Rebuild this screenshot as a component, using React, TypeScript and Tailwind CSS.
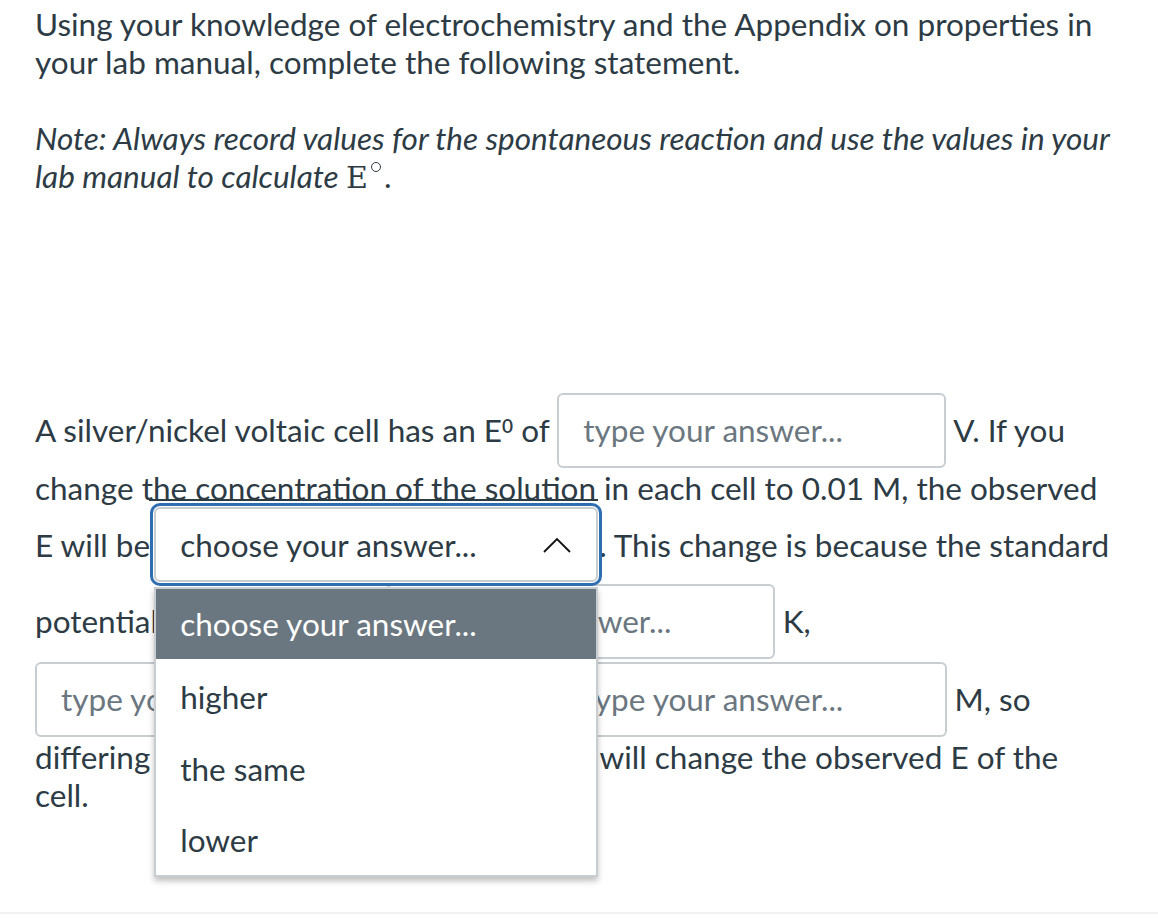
import React from "react";

const Input = ({ extra = "" }: { extra?: string }) => (
  <span
    className={`inline-block w-[389px] align-baseline my-[1.5px] border-2 border-[#c7cdd1] rounded-[6px] px-[24px] py-[16.5px] leading-[38px] text-[#6b7780] bg-white ${extra}`}
  >
    type your answer...
  </span>
);

export default function App() {
  return (
    <div
      className="relative w-[1158px] h-[918px] bg-white text-[#2d3b45] text-[31.5px] leading-[38px]"
      style={{ fontFamily: "Lato, 'Noto Sans', sans-serif" }}
    >
      <div className="pl-[35px] pr-[42px] pt-[5px]">
        <p>
          Using your knowledge of electrochemistry and the Appendix on properties in your lab manual, complete the
          following statement.
        </p>
        <p className="mt-[38px] italic">
          Note: Always record values for the spontaneous reaction and use the values in your lab manual to calculate{" "}
          <span className="not-italic text-[30px]" style={{ fontFamily: "'DejaVu Serif', serif" }}>
            E
          </span>
          <span className="inline-block w-[10px] h-[10px] rounded-full border-[1.5px] border-[#2d3b45] ml-[3px] mr-[4px] relative top-[-16px]" />
          .
        </p>
        <div className="mt-[194px]">
          A silver/nickel voltaic cell has an E<sup className="text-[19px] font-semibold">0</sup> of <Input /> V. If you
          change the concentration of the solution in each cell to 0.01 M, the observed E will be{" "}
          <span className="relative inline-block align-baseline ml-[-4px] mr-[1px]">
            <span className="absolute left-[-5px] right-[0px] top-[-8px] h-[2px] bg-[#2d3b45]" />
            <span className="flex items-center justify-between w-[444px] border-2 border-[#c7cdd1] rounded-[6px] pl-[24px] pr-[24px] pt-[17px] pb-[16px] leading-[38px] bg-white shadow-[0_0_0_1px_#ffffff,0_0_0_4px_#2f6eb0]">
              <span>choose your answer...</span>
              <svg width="30" height="18" viewBox="0 0 30 18" className="ml-2">
                <path d="M2 16 L15 3 L28 16" fill="none" stroke="#111" strokeWidth="1.8" />
              </svg>
            </span>
            <span className="absolute left-0 top-[80px] w-[444px] bg-white border-2 border-[#c7cdd1] shadow-[0_4px_6px_rgba(0,0,0,0.25)] z-10">
              <span className="block bg-[#6b7780] text-white pl-[24px] pt-[16px] h-[70px]">choose your answer...</span>
              <span className="block pl-[24px] h-[72px] pt-[19px]">higher</span>
              <span className="block pl-[24px] h-[72px] pt-[19px]">the same</span>
              <span className="block pl-[24px] h-[72px] pt-[18px]">lower</span>
            </span>
          </span>
          . This change is because the standard potential is measured at <Input extra="ml-[13px]" /> K,{" "}
          <Input /> and at a <Input extra="ml-[8px]" /> M, so differing conditions from the standard{" "}
          <span className="ml-[34px]">will</span> change the observed E of the cell.
        </div>
      </div>
      <div className="absolute left-0 right-0 bottom-[4px] h-[2px] bg-[#f2f2f2]" />
    </div>
  );
}
